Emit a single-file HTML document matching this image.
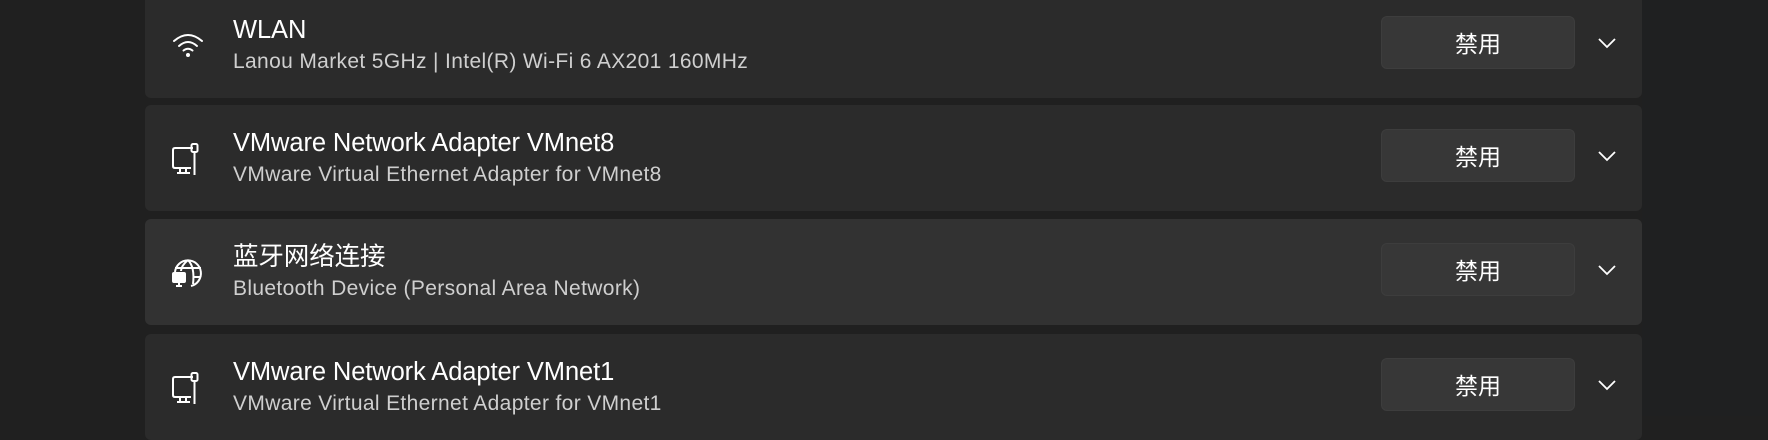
<!DOCTYPE html>
<html><head><meta charset="utf-8"><style>
html,body{margin:0;padding:0}
body{width:1768px;height:416px;background:#202020;overflow:hidden;position:relative;font-family:"Segoe UI","Liberation Sans","Noto Sans CJK SC",sans-serif;color:#fff}
.right{position:absolute;left:1642px;top:0;width:126px;height:416px;background:#1f2021}
.card{position:absolute;left:145px;width:1497px;height:106px;background:#2b2b2b;border-radius:6px}
.card.h{background:#323232}
.t{position:absolute;left:88px;top:23px;font-size:25.5px;line-height:30px;white-space:nowrap;letter-spacing:-0.1px}
.s{position:absolute;left:88px;top:58px;font-size:21px;line-height:24px;color:#cfcfcf;white-space:nowrap;letter-spacing:0.35px}
.btn{position:absolute;left:1236px;top:24px;width:194px;height:53px;background:#373737;border:1px solid #3d3d3d;box-sizing:border-box;border-radius:6px;font-size:23px;text-align:center;line-height:51px;font-family:"Noto Sans CJK SC",sans-serif}
.chev{position:absolute;left:1452px;top:45px}
.ic{position:absolute;left:26px;top:37px}
</style></head><body>
<div class="right"></div>

<div class="card" style="top:-8px">
<svg class="ic" width="34" height="30" viewBox="0 0 34 30" fill="none" stroke="#fff" stroke-width="2" stroke-linecap="round" style="top:38px"><path d="M3 11 Q17 -1 31 11"/><path d="M8 16 Q17 8 26 16"/><path d="M12.5 20.5 Q17 17 21.5 20.5"/><circle cx="17" cy="25" r="2" fill="#fff" stroke="none"/></svg>
<div class="t">WLAN</div><div class="s">Lanou Market 5GHz | Intel(R) Wi-Fi 6 AX201 160MHz</div>
<div class="btn">禁用</div>
<svg class="chev" width="20" height="12" viewBox="0 0 20 12" fill="none" stroke="#fff" stroke-width="1.8"><path d="M2 2 L10 10 L18 2"/></svg>
</div>

<div class="card" style="top:105px">
<svg class="ic" width="34" height="36" viewBox="0 0 34 36" fill="none" stroke="#fff" stroke-width="2"><path d="M22 6 H4 Q2 6 2 8 V24 Q2 26 4 26 H20"/><path d="M9 26 V31 M15 26 V31 M6 31 H19"/><rect x="20.5" y="2" width="6" height="8" rx="1.5"/><path d="M23.5 10 V33"/></svg>
<div class="t">VMware Network Adapter VMnet8</div><div class="s">VMware Virtual Ethernet Adapter for VMnet8</div>
<div class="btn">禁用</div>
<svg class="chev" width="20" height="12" viewBox="0 0 20 12" fill="none" stroke="#fff" stroke-width="1.8"><path d="M2 2 L10 10 L18 2"/></svg>
</div>

<div class="card h" style="top:219px">
<svg class="ic" width="34" height="34" viewBox="0 0 34 34" fill="none" stroke="#fff" stroke-width="2" style="top:38px"><path d="M4 15 A13 13 0 1 1 20 29"/><path d="M17 3 Q24 10 22 27 M17 3 Q10 9 10 14 M4 11 H30 M6 20 H10 M22 20 H30"/><rect x="2" y="16" width="12" height="9" rx="1" fill="#fff"/><path d="M5 29 H11 M8 25 V29"/></svg>
<div class="t">蓝牙网络连接</div><div class="s">Bluetooth Device (Personal Area Network)</div>
<div class="btn">禁用</div>
<svg class="chev" width="20" height="12" viewBox="0 0 20 12" fill="none" stroke="#fff" stroke-width="1.8"><path d="M2 2 L10 10 L18 2"/></svg>
</div>

<div class="card" style="top:334px">
<svg class="ic" width="34" height="36" viewBox="0 0 34 36" fill="none" stroke="#fff" stroke-width="2"><path d="M22 6 H4 Q2 6 2 8 V24 Q2 26 4 26 H20"/><path d="M9 26 V31 M15 26 V31 M6 31 H19"/><rect x="20.5" y="2" width="6" height="8" rx="1.5"/><path d="M23.5 10 V33"/></svg>
<div class="t">VMware Network Adapter VMnet1</div><div class="s">VMware Virtual Ethernet Adapter for VMnet1</div>
<div class="btn">禁用</div>
<svg class="chev" width="20" height="12" viewBox="0 0 20 12" fill="none" stroke="#fff" stroke-width="1.8"><path d="M2 2 L10 10 L18 2"/></svg>
</div>
</body></html>
